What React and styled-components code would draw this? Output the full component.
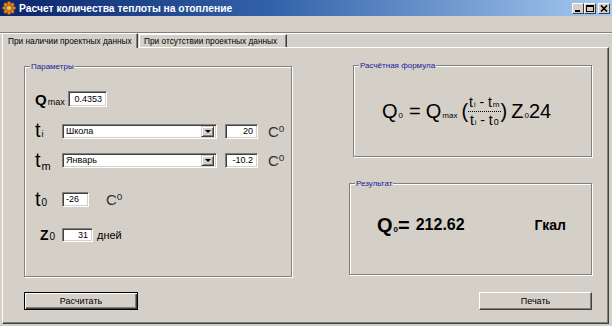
import React from 'react';
import styled, { createGlobalStyle } from 'styled-components';

const GlobalStyle = createGlobalStyle`
  html, body { margin: 0; padding: 0; background: #d4d0c8; }
  body { font-family: "Liberation Sans", Arial, sans-serif; color: #000; }
`;

const Window = styled.div`
  width: 612px;
  height: 326px;
  background: #d4d0c8;
  display: flex;
  flex-direction: column;
  overflow: hidden;
`;

const TitleBar = styled.div`
  height: 16px;
  flex: none;
  display: flex;
  align-items: center;
  padding: 0 2px;
  background: linear-gradient(to right, #0a246a 0%, #3463aa 45%, #a6caf0 100%);
`;

const TitleText = styled.span`
  margin-left: 3px;
  color: #fff;
  font-weight: bold;
  font-size: 10.3px;
  white-space: nowrap;
`;

const Controls = styled.div`
  margin-left: auto;
  display: flex;
`;

const CtlButton = styled.div`
  width: 12px;
  height: 11px;
  box-sizing: border-box;
  margin-left: ${p => p.$gap || 0}px;
  background: #d4d0c8;
  border: 1px solid;
  border-color: #fff #404040 #404040 #fff;
  display: flex;
  align-items: center;
  justify-content: center;
`;

const MenuBar = styled.div`
  height: 16px;
  flex: none;
  border-bottom: 1px solid #808080;
`;

const TabStrip = styled.div`
  height: 14px;
  flex: none;
  display: flex;
  align-items: flex-end;
  padding-left: 2px;
  position: relative;
  z-index: 1;
  border-top: 1px solid #fff;
  box-sizing: border-box;
`;

const Tab = styled.div`
  box-sizing: border-box;
  width: ${p => p.$w}px;
  height: ${p => (p.$active ? 15 : 13)}px;
  margin-bottom: ${p => (p.$active ? -1 : 0)}px;
  margin-left: ${p => (p.$active ? 0 : 1)}px;
  background: #d4d0c8;
  border-top: 1px solid #fff;
  border-left: 1px solid #fff;
  border-right: 1px solid #404040;
  box-shadow: inset -1px 0 0 #808080;
  font-size: 8.3px;
  padding: ${p => (p.$active ? '2px 0 0 5px' : '1px 0 0 4px')};
  white-space: nowrap;
  overflow: hidden;
`;

const TabPage = styled.div`
  height: 277px;
  flex: none;
  margin: 0 3px 0 2px;
  box-sizing: border-box;
  border: 1px solid;
  border-color: #fff #404040 #404040 #fff;
  box-shadow: inset -1px -1px 0 #808080;
  display: grid;
  grid-template-columns: 268px 243px;
  column-gap: 57px;
  padding-left: 21px;
  align-items: start;
`;

const Column = styled.div`
  display: flex;
  flex-direction: column;
`;

const GroupBox = styled.div`
  position: relative;
  box-sizing: border-box;
  height: ${p => p.$h}px;
  margin-top: ${p => p.$top}px;
  margin-left: ${p => p.$left || 0}px;
  border: 1px solid #808080;
  box-shadow: inset 1px 1px 0 #fff, 1px 1px 0 #fff;
`;

const Legend = styled.span`
  position: absolute;
  top: -5px;
  left: 5px;
  padding: 0 1px;
  background: #d4d0c8;
  color: #2020a0;
  font-size: 8px;
  line-height: 9px;
  white-space: nowrap;
`;

const ParamsBody = styled.div`
  padding: 24px 0 0 10px;
  display: flex;
  flex-direction: column;
`;

const Row = styled.div`
  display: flex;
  align-items: center;
  height: 16px;
  margin-top: ${p => p.$top || 0}px;
`;

const Sym = styled.div`
  width: ${p => p.$w}px;
  flex: none;
  display: flex;
  align-items: baseline;
  padding-left: ${p => p.$pad || 0}px;
  box-sizing: border-box;
  margin-top: ${p => p.$shift || 0}px;
`;

const Big = styled.span`
  font-size: ${p => p.$size}px;
  font-weight: ${p => (p.$bold ? 'bold' : 'normal')};
  line-height: 1;
`;

const Sub = styled.span`
  font-size: ${p => p.$size || 9}px;
  line-height: 1;
  margin-left: 1px;
  position: relative;
  top: ${p => p.$drop || 0}px;
`;

const Field = styled.div`
  box-sizing: border-box;
  width: ${p => p.$w}px;
  height: ${p => p.$h || 16}px;
  margin-left: ${p => p.$left || 0}px;
  background: #fff;
  border: 1px solid;
  border-color: #808080 #fff #fff #808080;
  box-shadow: inset 1px 1px 0 #404040, inset -1px -1px 0 #d4d0c8;
  font-size: 9px;
  display: flex;
  align-items: center;
  justify-content: ${p => (p.$right ? 'flex-end' : 'flex-start')};
  padding: 0 4px 0 3px;
  flex: none;
`;

const Combo = styled(Field)`
  padding-right: 2px;
`;

const ComboText = styled.span`
  flex: 1;
`;

const DropButton = styled.div`
  width: 13px;
  height: 11px;
  box-sizing: border-box;
  background: #d4d0c8;
  border: 1px solid;
  border-color: #d4d0c8 #404040 #404040 #d4d0c8;
  box-shadow: inset 1px 1px 0 #fff, inset -1px -1px 0 #808080;
  display: flex;
  align-items: center;
  justify-content: center;
`;

const Arrow = styled.span`
  width: 0;
  height: 0;
  border-left: 3px solid transparent;
  border-right: 3px solid transparent;
  border-top: 3px solid #000;
`;

const Unit = styled.span`
  margin-left: ${p => p.$left}px;
  font-size: 15px;
  color: #303030;
  line-height: 1;
  white-space: nowrap;
`;

const Sup = styled.span`
  font-size: 10px;
  position: relative;
  top: -5px;
`;

const Days = styled.span`
  margin-left: 4px;
  font-size: 11px;
`;

const Button = styled.div`
  box-sizing: border-box;
  width: ${p => p.$w}px;
  height: 18px;
  margin-top: ${p => p.$top}px;
  align-self: ${p => (p.$end ? 'flex-end' : 'flex-start')};
  background: #d4d0c8;
  border: 1px solid;
  border-color: ${p => (p.$default ? '#000' : '#fff #404040 #404040 #fff')};
  box-shadow: ${p =>
    p.$default
      ? 'inset 1px 1px 0 #fff, inset -1px -1px 0 #404040, inset -2px -2px 0 #808080'
      : 'inset -1px -1px 0 #808080'};
  font-size: 9px;
  display: flex;
  align-items: center;
  justify-content: center;
`;

const FormulaBody = styled.div`
  height: 100%;
  display: flex;
  align-items: center;
  padding-left: 28px;
  font-size: 20px;
  white-space: nowrap;
`;

const Term = styled.span`
  display: inline-flex;
  align-items: baseline;
  line-height: 1;
`;

const FSub = styled.span`
  font-size: 8px;
  margin-left: 1px;
`;

const Eq = styled.span`
  margin: 0 5px 0 6px;
  line-height: 1;
`;

const Paren = styled.span`
  line-height: 1;
  font-size: 20px;
  margin: ${p => p.$m};
`;

const Frac = styled.div`
  display: flex;
  flex-direction: column;
  align-items: center;
  font-size: 14px;
  line-height: 1;
`;

const FracPart = styled.span`
  display: inline-flex;
  align-items: baseline;
  padding: 0 1px;
`;

const FracLine = styled.div`
  align-self: stretch;
  border-top: 1px dotted #000;
  margin: 2px 0 1px;
`;

const Small = styled.span`
  font-size: ${p => p.$size || 7}px;
  margin-left: 1px;
`;

const ResultBody = styled.div`
  height: 100%;
  box-sizing: border-box;
  display: flex;
  align-items: center;
  padding: 0 25px 8px 27px;
  font-weight: bold;
  white-space: nowrap;
`;

const ResultQ = styled.span`
  font-size: 20px;
  line-height: 1;
  display: inline-flex;
  align-items: baseline;
`;

const ResultValue = styled.span`
  font-size: 16px;
  margin-left: 6px;
`;

const ResultUnit = styled.span`
  font-size: 14px;
  margin-left: auto;
`;

const AppIcon = () => (
  <svg width="14" height="14" viewBox="0 0 14 14">
    {[0, 45, 90, 135, 180, 225, 270, 315].map(a => (
      <ellipse key={a} cx="7" cy="2.6" rx="1.8" ry="2.4" fill="#d9822b" stroke="#8a4a10" strokeWidth="0.5" transform={`rotate(${a} 7 7)`} />
    ))}
    <circle cx="7" cy="7" r="2.6" fill="#f4c040" stroke="#8a4a10" strokeWidth="0.5" />
  </svg>
);

const App = () => {
  return (
    <Window>
      <GlobalStyle />
      <TitleBar>
        <AppIcon />
        <TitleText>Расчет количества теплоты на отопление</TitleText>
        <Controls>
          <CtlButton>
            <svg width="8" height="7" viewBox="0 0 8 7"><rect x="1" y="5" width="5" height="2" fill="#000" /></svg>
          </CtlButton>
          <CtlButton>
            <svg width="8" height="7" viewBox="0 0 8 7"><rect x="0.5" y="0.5" width="7" height="6" fill="none" stroke="#000" /><rect x="0" y="0" width="8" height="2" fill="#000" /></svg>
          </CtlButton>
          <CtlButton $gap={2}>
            <svg width="8" height="7" viewBox="0 0 8 7"><path d="M1 0.5 L7 6.5 M7 0.5 L1 6.5" stroke="#000" strokeWidth="1.6" /></svg>
          </CtlButton>
        </Controls>
      </TitleBar>
      <MenuBar />
      <TabStrip>
        <Tab $active $w={136}>При наличии проектных данных</Tab>
        <Tab $w={148}>При отсутствии проектных данных</Tab>
      </TabStrip>
      <TabPage>
        <Column>
          <GroupBox $h={211} $top={18}>
            <Legend>Параметры</Legend>
            <ParamsBody>
              <Row>
                <Sym $w={33}>
                  <Big $size={15} $bold>Q</Big>
                  <Sub $size={9}>max</Sub>
                </Sym>
                <Field $w={39} $right>0.4353</Field>
              </Row>
              <Row $top={16}>
                <Sym $w={27} $shift={-2}>
                  <Big $size={20}>t</Big>
                  <Sub $size={9}>i</Sub>
                </Sym>
                <Combo $w={155} $h={15}>
                  <ComboText>Школа</ComboText>
                  <DropButton><Arrow /></DropButton>
                </Combo>
                <Field $w={33} $h={15} $left={8} $right>20</Field>
                <Unit $left={10}>C<Sup>o</Sup></Unit>
              </Row>
              <Row $top={13}>
                <Sym $w={27} $shift={-1}>
                  <Big $size={20}>t</Big>
                  <Sub $size={11} $drop={3}>m</Sub>
                </Sym>
                <Combo $w={155} $h={15}>
                  <ComboText>Январь</ComboText>
                  <DropButton><Arrow /></DropButton>
                </Combo>
                <Field $w={33} $h={15} $left={8} $right>-10.2</Field>
                <Unit $left={10}>C<Sup>o</Sup></Unit>
              </Row>
              <Row $top={23}>
                <Sym $w={27}>
                  <Big $size={20}>t</Big>
                  <Sub $size={10}>0</Sub>
                </Sym>
                <Field $w={27} $h={15}>-26</Field>
                <Unit $left={17}>C<Sup>o</Sup></Unit>
              </Row>
              <Row $top={20}>
                <Sym $w={27} $pad={5}>
                  <Big $size={14} $bold>Z</Big>
                  <Sub $size={10}>0</Sub>
                </Sym>
                <Field $w={31} $h={14} $right>31</Field>
                <Days>дней</Days>
              </Row>
            </ParamsBody>
          </GroupBox>
          <Button $default $w={114} $top={15}>Расчитать</Button>
        </Column>
        <Column>
          <GroupBox $h={92} $top={17} $left={4}>
            <Legend>Расчётная формула</Legend>
            <FormulaBody>
              <Term>Q<FSub>0</FSub></Term>
              <Eq>=</Eq>
              <Term>Q<FSub>max</FSub></Term>
              <Paren $m="0 0 0 4px">(</Paren>
              <Frac>
                <FracPart>t<Small>i</Small>&nbsp;-&nbsp;t<Small $size={8}>m</Small></FracPart>
                <FracLine />
                <FracPart>t<Small>i</Small>&nbsp;-&nbsp;t<Small $size={9}>0</Small></FracPart>
              </Frac>
              <Paren $m="0 4px 0 0">)</Paren>
              <Term>Z<FSub>0</FSub>24</Term>
            </FormulaBody>
          </GroupBox>
          <GroupBox $h={92} $top={26}>
            <Legend>Результат</Legend>
            <ResultBody>
              <ResultQ>Q<FSub>0</FSub>=</ResultQ>
              <ResultValue>212.62</ResultValue>
              <ResultUnit>Гкал</ResultUnit>
            </ResultBody>
          </GroupBox>
          <Button $end $w={113} $top={17}>Печать</Button>
        </Column>
      </TabPage>
    </Window>
  );
};

export default App;
